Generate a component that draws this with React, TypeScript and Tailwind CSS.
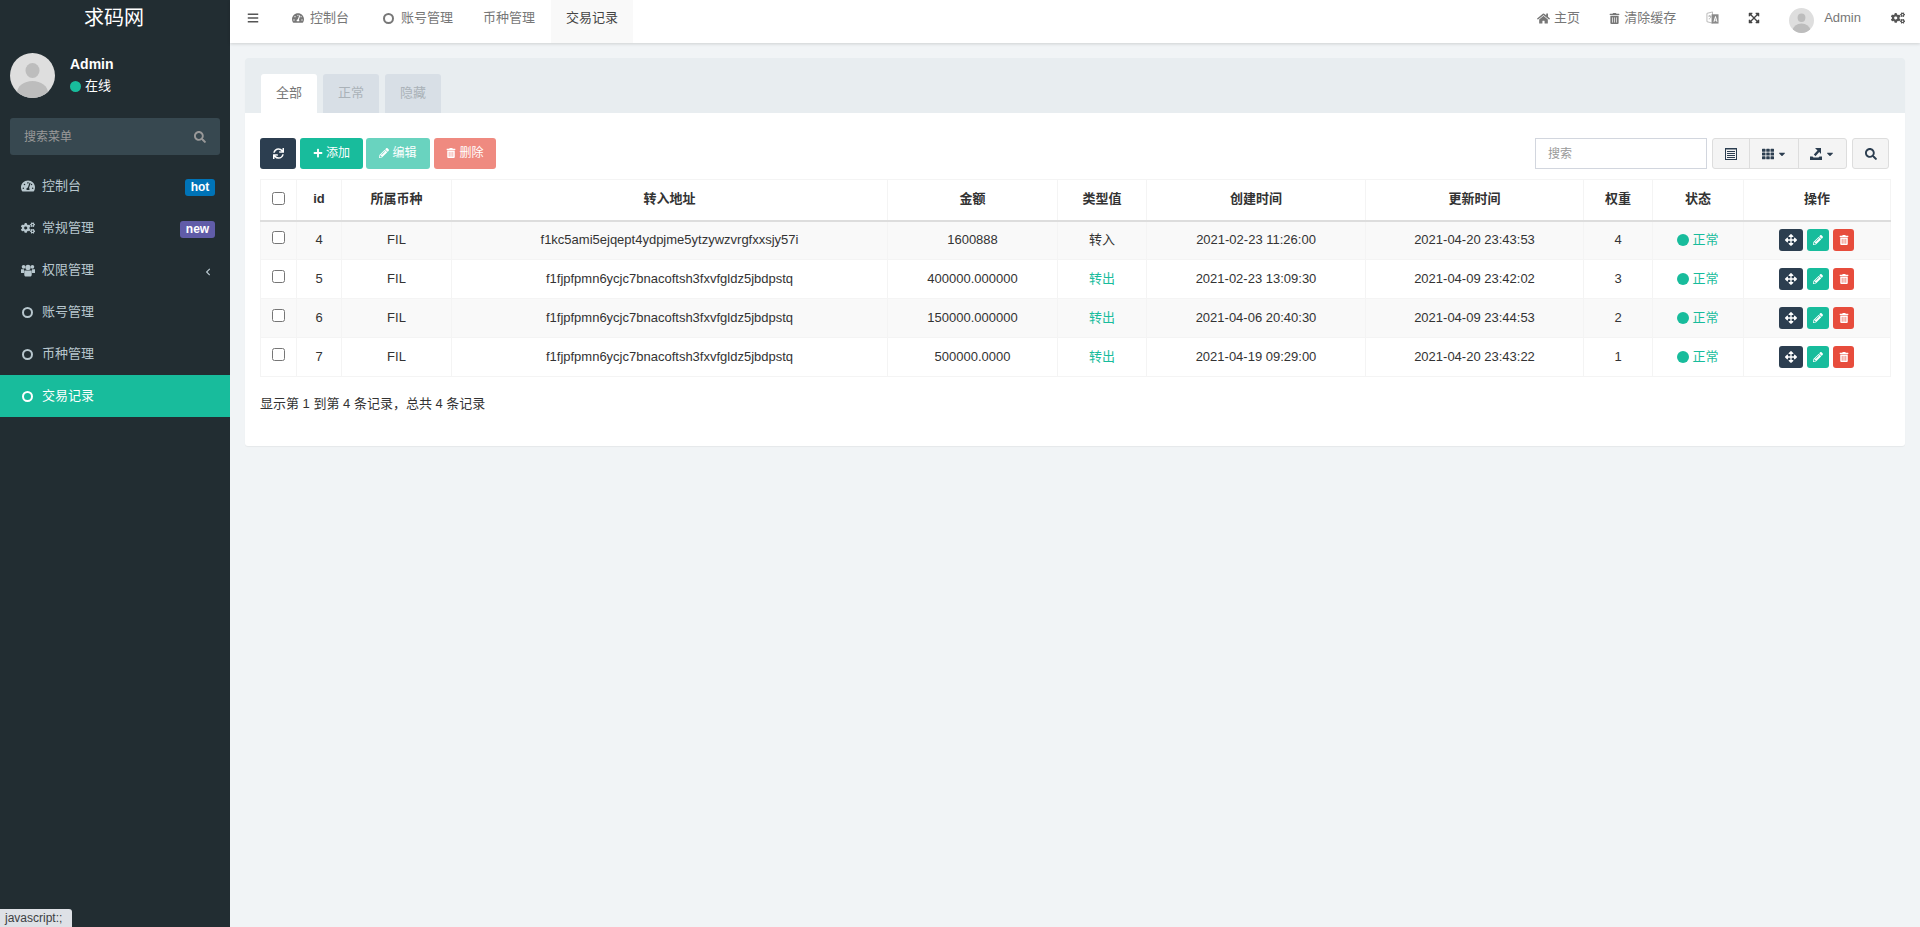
import { FaBars, FaCogs, FaExpandArrowsAlt, FaHome, FaPencilAlt, FaPlus, FaSearch, FaSync, FaTachometerAlt, FaTh, FaTrashAlt, FaArrowsAlt, FaChevronLeft, FaCaretDown } from "react-icons/fa";

const rows = [
  { id: 4, addr: "f1kc5ami5ejqept4ydpjme5ytzywzvrgfxxsjy57i", amount: "1600888", type: "转入", created: "2021-02-23 11:26:00", updated: "2021-04-20 23:43:53", weight: 4 },
  { id: 5, addr: "f1fjpfpmn6ycjc7bnacoftsh3fxvfgldz5jbdpstq", amount: "400000.000000", type: "转出", created: "2021-02-23 13:09:30", updated: "2021-04-09 23:42:02", weight: 3 },
  { id: 6, addr: "f1fjpfpmn6ycjc7bnacoftsh3fxvfgldz5jbdpstq", amount: "150000.000000", type: "转出", created: "2021-04-06 20:40:30", updated: "2021-04-09 23:44:53", weight: 2 },
  { id: 7, addr: "f1fjpfpmn6ycjc7bnacoftsh3fxvfgldz5jbdpstq", amount: "500000.0000", type: "转出", created: "2021-04-19 09:29:00", updated: "2021-04-20 23:43:22", weight: 1 },
];

const headers = ["id", "所属币种", "转入地址", "金额", "类型值", "创建时间", "更新时间", "权重", "状态", "操作"];

const Ring = ({ className = "" }: { className?: string }) => (
  <span className={`inline-block w-[11px] h-[11px] rounded-full border-2 ${className}`} />
);

const Avatar = ({ size }: { size: string }) => (
  <svg viewBox="0 0 45 45" className={`${size} rounded-full`}>
    <rect width="45" height="45" fill="#dedede" />
    <ellipse cx="22.5" cy="17.5" rx="7" ry="7.5" fill="#bdbdbd" />
    <ellipse cx="22.5" cy="40" rx="15.5" ry="12" fill="#bdbdbd" />
  </svg>
);

const GroupIcon = () => (
  <svg viewBox="0 0 15 13" className="w-[14px] h-[13px]" fill="currentColor">
    <circle cx="2.800" cy="2.600" r="2" />
    <circle cx="12.200" cy="2.600" r="2" />
    <circle cx="7.500" cy="3.200" r="2.800" />
    <path d="M0 5.200h3.200v4H0zM11.800 5.200H15v4h-3.200z" />
    <path d="M3.500 6.500h8V11c0 1.300-1 2-2 2h-4c-1 0-2-.7-2-2z" />
  </svg>
);

const LanguageIcon = () => (
  <svg viewBox="0 0 14 14" className="w-[13px] h-[14px]">
    <path d="M1 2l6-1.500V12.500L1 11z" fill="#fff" stroke="#b5b5b5" strokeWidth="1" />
    <path d="M6 3h7.500v10H6z" fill="#8a8a8a" />
    <path d="M8 11l1.800-6h.8l1.800 6h-1.200l-.3-1.200H9.500L9.200 11zM9.800 8.800h1l-.5-2z" fill="#fff" />
    <path d="M2.500 5h3M4 4v1M3 8c1 0 2-1 2.300-3" stroke="#999" strokeWidth=".8" fill="none" />
  </svg>
);

const ListIcon = () => (
  <svg viewBox="0 0 12 12" className="w-[12px] h-[12px]">
    <path d="M0 0h12v12H0z" fill="#2c3e50" />
    <path d="M1 1.500h10v9.500H1z" fill="#f4f4f4" />
    <path d="M2 3h8v1H2zM2 5h8v1H2zM2 7h8v1H2zM2 9h8v1H2z" fill="#2c3e50" />
  </svg>
);

const ExportIcon = () => (
  <svg viewBox="0 0 12 12" className="w-[12px] h-[12px]" fill="#2c3e50">
    <path d="M0 8.500h2.500l1 1h5l1-1H12V12H0z" />
    <path d="M5 0h6v6L9.200 4 5.500 8.200 3.800 6.500 7.500 2.500z" />
  </svg>
);

const menu = [
  { label: "控制台", icon: <FaTachometerAlt className="text-[14px]" />, badge: "hot" },
  { label: "常规管理", icon: <FaCogs className="text-[14px]" />, badge: "new" },
  { label: "权限管理", icon: <GroupIcon />, arrow: true },
  { label: "账号管理", icon: <Ring className="border-[#b8c7ce] ml-[1px]" /> },
  { label: "币种管理", icon: <Ring className="border-[#b8c7ce] ml-[1px]" /> },
  { label: "交易记录", icon: <Ring className="border-white ml-[1px]" />, active: true },
];

const Sidebar = () => (
  <aside className="w-[230px] shrink-0 bg-[#222d32] flex flex-col">
    <div className="h-[43px] flex items-center justify-center pr-[2px] pb-[7px] text-[20px] text-white">求码网</div>
    <div className="flex pl-[10px] pt-[10px] h-[75px]">
      <Avatar size="w-[45px] h-[45px]" />
      <div className="ml-[15px] pt-[1px] text-white">
        <div className="text-[14px] font-bold leading-[20px]">Admin</div>
        <div className="mt-[2px] flex items-center text-[13px] leading-[20px]">
          <span className="w-[11px] h-[11px] rounded-full bg-[#18bc9c] mr-[4px]" />
          在线
        </div>
      </div>
    </div>
    <div className="mx-[10px] h-[37px] rounded-[3px] bg-[#374850] flex items-center justify-between pl-[14px] pr-[14px] text-[12px] text-[#999]">
      <span>搜索菜单</span>
      <FaSearch className="text-[12px]" />
    </div>
    <nav className="mt-[10px]">
      {menu.map((m) => (
        <div
          key={m.label}
          className={`h-[42px] flex items-center pl-[21px] pr-[15px] text-[13px] ${m.active ? "bg-[#18bc9c] text-white" : "text-[#b8c7ce]"}`}
        >
          <span className="w-[15px] flex items-center">{m.icon}</span>
          <span className="ml-[6px]">{m.label}</span>
          {m.badge === "hot" && <span className="ml-auto mt-[3px] w-[30px] h-[17px] rounded-[3px] bg-[#0073b7] text-white text-[12px] font-bold leading-[17px] text-center">hot</span>}
          {m.badge === "new" && <span className="ml-auto mt-[3px] w-[35px] h-[17px] rounded-[3px] bg-[#605ca8] text-white text-[12px] font-bold leading-[17px] text-center">new</span>}
          {m.arrow && <FaChevronLeft className="ml-auto mr-[3px] mt-[3px] text-[8px]" />}
        </div>
      ))}
    </nav>
  </aside>
);

const Header = () => (
  <header className="h-[43px] shrink-0 bg-white shadow-[0_1px_3px_rgba(0,0,0,0.15)] flex items-center text-[13px] text-[#777] relative">
    <FaBars className="ml-[17px] mb-[7px] text-[12px] text-[#555]" />
    <div className="ml-[18px] h-full flex">
      <div className="pl-[15px] pr-[19px] pb-[7px] flex items-center gap-[6px]"><FaTachometerAlt className="text-[12px]" />控制台</div>
      <div className="px-[15px] pb-[7px] flex items-center gap-[7px]"><Ring className="border-[#777]" />账号管理</div>
      <div className="pl-[15px] pr-[16px] pb-[7px] flex items-center">币种管理</div>
      <div className="px-[15px] pb-[7px] flex items-center bg-[#f9f9f9] text-[#444]">交易记录</div>
    </div>
    <div className="ml-auto h-full flex items-center pr-[15px] pb-[7px]">
      <FaHome className="text-[13px]" />
      <span className="ml-[4px]">主页</span>
      <FaTrashAlt className="ml-[29px] text-[11px]" />
      <span className="ml-[4px]">清除缓存</span>
      <span className="ml-[30px]"><LanguageIcon /></span>
      <FaExpandArrowsAlt className="ml-[29px] text-[12px] text-[#444]" />
      <span className="ml-[29px] mt-[5px]"><Avatar size="w-[25px] h-[25px]" /></span>
      <span className="ml-[10px]">Admin</span>
      <FaCogs className="ml-[30px] text-[14px] text-[#555]" />
    </div>
  </header>
);

const Toolbar = () => (
  <div className="flex items-center text-[12px] text-white h-[31px]">
    <button className="w-[36px] h-full rounded-[3px] bg-[#2c3e50] flex items-center justify-center"><FaSync className="text-[11px]" /></button>
    <button className="ml-[4px] w-[63px] h-full pb-[1px] rounded-[3px] bg-[#18bc9c] flex items-center justify-center gap-[3px]"><FaPlus className="text-[10px]" />添加</button>
    <button className="ml-[3px] w-[64px] h-full pb-[1px] rounded-[3px] bg-[#18bc9c]/65 flex items-center justify-center gap-[3px]"><FaPencilAlt className="text-[10px]" />编辑</button>
    <button className="ml-[4px] w-[62px] h-full pb-[1px] rounded-[3px] bg-[#e74c3c]/65 flex items-center justify-center gap-[3px]"><FaTrashAlt className="text-[10px]" />删除</button>
    <div className="ml-auto w-[172px] h-full border border-[#d2d6de] bg-white pl-[12px] flex items-center text-[#999]">搜索</div>
    <div className="ml-[5px] h-full flex rounded-[3px] border border-[#ddd] bg-[#f4f4f4] text-[#2c3e50]">
      <div className="w-[36px] flex items-center justify-center"><ListIcon /></div>
      <div className="w-[49px] border-l border-[#ddd] flex items-center justify-center gap-[3px]"><FaTh className="text-[12px]" /><FaCaretDown className="text-[10px]" /></div>
      <div className="w-[48px] border-l border-[#ddd] flex items-center justify-center gap-[3px]"><ExportIcon /><FaCaretDown className="text-[10px]" /></div>
    </div>
    <div className="ml-[5px] w-[37px] h-full rounded-[3px] border border-[#ddd] bg-[#f4f4f4] flex items-center justify-center text-[#2c3e50]"><FaSearch className="text-[12px]" /></div>
  </div>
);

const Table = () => (
  <table className="mt-[10px] w-[1630px] table-fixed border-collapse text-[13px] text-[#333]">
    <colgroup>
      <col className="w-[36px]" />
      <col className="w-[45px]" />
      <col className="w-[110px]" />
      <col className="w-[436px]" />
      <col className="w-[170px]" />
      <col className="w-[89px]" />
      <col className="w-[219px]" />
      <col className="w-[218px]" />
      <col className="w-[69px]" />
      <col className="w-[91px]" />
      <col className="w-[147px]" />
    </colgroup>
    <thead>
      <tr className="h-[41px] border-b-2 border-[#ddd]">
        <th className="border border-[#f4f4f4] border-b-[#ddd] border-b-2 p-0"><input type="checkbox" className="block mx-auto -mt-[3px]" /></th>
        {headers.map((h) => (
          <th key={h} className="border border-[#f4f4f4] border-b-[#ddd] border-b-2 font-semibold p-0 pb-[2px] text-center">{h}</th>
        ))}
      </tr>
    </thead>
    <tbody>
      {rows.map((r, i) => (
        <tr key={r.id} className={`h-[39px] ${i % 2 === 0 ? "bg-[#f9f9f9]" : "bg-white"}`}>
          <td className="border border-[#f4f4f4] p-0"><input type="checkbox" className="block mx-auto -mt-[6px]" /></td>
          <td className="border border-[#f4f4f4] p-0 pb-[1px] text-center">{r.id}</td>
          <td className="border border-[#f4f4f4] p-0 pb-[1px] text-center">FIL</td>
          <td className="border border-[#f4f4f4] p-0 pb-[1px] text-center">{r.addr}</td>
          <td className="border border-[#f4f4f4] p-0 pb-[1px] text-center">{r.amount}</td>
          <td className={`border border-[#f4f4f4] p-0 pb-[1px] text-center ${r.type === "转出" ? "text-[#18bc9c]" : ""}`}>{r.type}</td>
          <td className="border border-[#f4f4f4] p-0 pb-[1px] text-center">{r.created}</td>
          <td className="border border-[#f4f4f4] p-0 pb-[1px] text-center">{r.updated}</td>
          <td className="border border-[#f4f4f4] p-0 pb-[1px] text-center">{r.weight}</td>
          <td className="border border-[#f4f4f4] p-0 pb-[1px] text-[#18bc9c]">
            <div className="flex items-center justify-center gap-[3px]"><span className="w-[12px] h-[12px] rounded-full bg-[#18bc9c]" />正常</div>
          </td>
          <td className="border border-[#f4f4f4] p-0">
            <div className="flex items-center justify-center gap-[4px] text-white text-[12px] pr-[1px]">
              <span className="w-[24px] h-[22px] rounded-[3px] bg-[#2c3e50] flex items-center justify-center"><FaArrowsAlt /></span>
              <span className="w-[22px] h-[22px] rounded-[3px] bg-[#18bc9c] flex items-center justify-center"><FaPencilAlt className="text-[10px]" /></span>
              <span className="w-[21px] h-[22px] rounded-[3px] bg-[#e74c3c] flex items-center justify-center"><FaTrashAlt className="text-[10px]" /></span>
            </div>
          </td>
        </tr>
      ))}
    </tbody>
  </table>
);

export default function App() {
  return (
    <div className="h-[927px] flex overflow-hidden bg-[#f1f4f6] relative font-[Liberation_Sans,Noto_Sans_CJK_SC,sans-serif]">
      <Sidebar />
      <div className="flex-1 flex flex-col min-w-0">
        <Header />
        <main className="mt-[15px] mx-[15px] h-[388px] bg-white rounded-[3px] shadow-[0_1px_1px_rgba(0,0,0,0.05)]">
          <div className="h-[55px] bg-[#e8edf0] rounded-t-[3px] flex items-end pl-[16px] gap-[6px] text-[13px]">
            <div className="w-[56px] h-[39px] pb-[2px] rounded-t-[3px] bg-white text-[#777] flex items-center justify-center">全部</div>
            <div className="w-[56px] h-[39px] pb-[2px] rounded-t-[3px] bg-[#d8dfe6] text-[#aab2b8] flex items-center justify-center">正常</div>
            <div className="w-[56px] h-[39px] pb-[2px] rounded-t-[3px] bg-[#d8dfe6] text-[#aab2b8] flex items-center justify-center">隐藏</div>
          </div>
          <div className="pt-[25px] pl-[15px] pr-[16px]">
            <Toolbar />
            <Table />
            <div className="mt-[18px] text-[13px] text-[#333] leading-[18px]">显示第 1 到第 4 条记录，总共 4 条记录</div>
          </div>
        </main>
      </div>
      <div className="absolute left-0 bottom-0 w-[72px] h-[18px] bg-[#dee1e6] rounded-tr-[3px] pl-[5px] text-[12px] leading-[18px] text-[#3c4043]">javascript:;</div>
    </div>
  );
}
